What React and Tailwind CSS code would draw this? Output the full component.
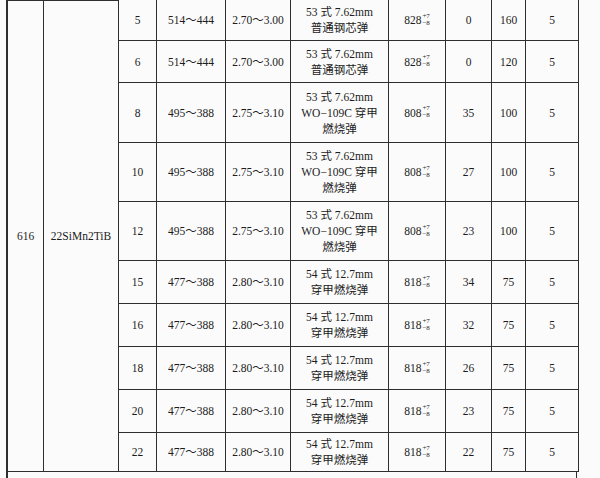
import React from "react";

const rows = [
  { no: "5", range: "514～444", ratio: "2.70～3.00", ammo: ["53 式 7.62mm", "普通钢芯弹"], v: "828", a: "0", d: "160", n: "5" },
  { no: "6", range: "514～444", ratio: "2.70～3.00", ammo: ["53 式 7.62mm", "普通钢芯弹"], v: "828", a: "0", d: "120", n: "5" },
  { no: "8", range: "495～388", ratio: "2.75～3.10", ammo: ["53 式 7.62mm", "WO−109C 穿甲", "燃烧弹"], v: "808", a: "35", d: "100", n: "5" },
  { no: "10", range: "495～388", ratio: "2.75～3.10", ammo: ["53 式 7.62mm", "WO−109C 穿甲", "燃烧弹"], v: "808", a: "27", d: "100", n: "5" },
  { no: "12", range: "495～388", ratio: "2.75～3.10", ammo: ["53 式 7.62mm", "WO−109C 穿甲", "燃烧弹"], v: "808", a: "23", d: "100", n: "5" },
  { no: "15", range: "477～388", ratio: "2.80～3.10", ammo: ["54 式 12.7mm", "穿甲燃烧弹"], v: "818", a: "34", d: "75", n: "5" },
  { no: "16", range: "477～388", ratio: "2.80～3.10", ammo: ["54 式 12.7mm", "穿甲燃烧弹"], v: "818", a: "32", d: "75", n: "5" },
  { no: "18", range: "477～388", ratio: "2.80～3.10", ammo: ["54 式 12.7mm", "穿甲燃烧弹"], v: "818", a: "26", d: "75", n: "5" },
  { no: "20", range: "477～388", ratio: "2.80～3.10", ammo: ["54 式 12.7mm", "穿甲燃烧弹"], v: "818", a: "23", d: "75", n: "5" },
  { no: "22", range: "477～388", ratio: "2.80～3.10", ammo: ["54 式 12.7mm", "穿甲燃烧弹"], v: "818", a: "22", d: "75", n: "5" },
];

const cell = "flex flex-col items-center justify-center text-center border-r border-b border-[#2e2e2e]";

const Speed = ({ v }) => (
  <span className="inline-flex items-center">
    <span>{v}</span>
    <span className="flex flex-col text-[7px] leading-[7px] ml-[1px] -mt-[1px]">
      <span>+7</span>
      <span>−8</span>
    </span>
  </span>
);

export default function App() {
  return (
    <div
      className="w-[600px] h-[478px] bg-[#fbfbfb] text-[#1c1c1c] text-[11.5px] leading-[16px] overflow-hidden pl-[6px]"
      style={{ fontFamily: '"Liberation Serif", "Noto Sans CJK SC", serif' }}
    >
      <div className="grid grid-cols-[36px_75px_38px_69px_65px_98px_57px_46px_34px_53px] grid-rows-[41px_42px_60px_59px_59px_43px_43px_43px_43px_39px] w-[571px] border-l-2 border-[#2e2e2e]">
        <div className={`${cell} row-span-10 border-t`}>616</div>
        <div className={`${cell} row-span-10 border-t`}>22SiMn2TiB</div>
        {rows.map((r, i) => (
          <React.Fragment key={i}>
            <div className={cell}>{r.no}</div>
            <div className={cell}>{r.range}</div>
            <div className={cell}>{r.ratio}</div>
            <div className={cell}>
              {r.ammo.map((t, j) => (
                <span key={j}>{t}</span>
              ))}
            </div>
            <div className={cell}>
              <Speed v={r.v} />
            </div>
            <div className={cell}>{r.a}</div>
            <div className={cell}>{r.d}</div>
            <div className={cell}>{r.n}</div>
          </React.Fragment>
        ))}
      </div>
      <div className="w-[571px] h-[6px] border-l-2 border-r border-[#2e2e2e]" />
    </div>
  );
}
